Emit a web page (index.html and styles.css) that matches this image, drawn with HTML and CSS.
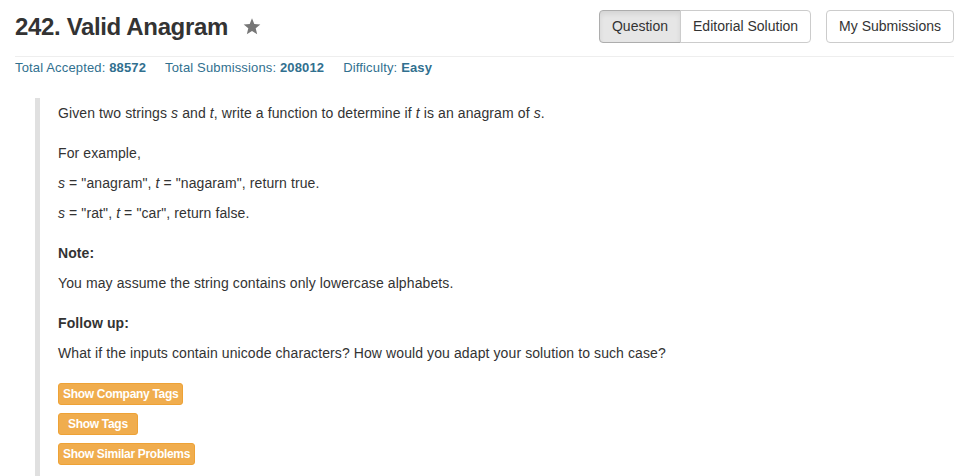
FILE: index.html
```html
<!DOCTYPE html>
<html>
<head>
<meta charset="utf-8">
<link rel="stylesheet" href="styles.css">
</head>
<body>
<div class="page">
  <div class="header">
    <h1 class="title">242. Valid Anagram
      <svg class="star" width="18" height="17" viewBox="0 0 24 23"><path d="M12 0.5l3.1 7.6 8.2 0.6-6.3 5.3 2 8-7-4.4-7 4.4 2-8L0.7 8.7l8.2-0.6z" fill="#777"/></svg>
    </h1>
    <div class="actions">
      <div class="btn-group">
        <span class="btn active">Question</span>
        <span class="btn">Editorial Solution</span>
      </div>
      <span class="btn single">My Submissions</span>
    </div>
  </div>
  <div class="stats">
    <span class="stat">Total Accepted: <b>88572</b></span>
    <span class="stat">Total Submissions: <b>208012</b></span>
    <span class="stat">Difficulty: <b>Easy</b></span>
  </div>
  <div class="question">
    <p class="gap">Given two strings <i>s</i> and <i>t</i>, write a function to determine if <i>t</i> is an anagram of <i>s</i>.</p>
    <p>For example,</p>
    <p><i>s</i> = "anagram", <i>t</i> = "nagaram", return true.</p>
    <p class="gap"><i>s</i> = "rat", <i>t</i> = "car", return false.</p>
    <p><b>Note:</b></p>
    <p class="gap">You may assume the string contains only lowercase alphabets.</p>
    <p><b>Follow up:</b></p>
    <p class="gap">What if the inputs contain unicode characters? How would you adapt your solution to such case?</p>
    <div class="tags">
      <span class="tag">Show Company Tags</span>
      <span class="tag wide">Show Tags</span>
      <span class="tag">Show Similar Problems</span>
    </div>
  </div>
</div>
</body>
</html>
```
FILE: styles.css
```css
html, body {
  margin: 0;
  padding: 0;
  background: #fff;
}
body {
  font-family: "Liberation Sans", Arial, sans-serif;
  color: #333;
  font-size: 14px;
  line-height: 20px;
}
.page {
  padding: 0 19px 0 15px;
}
.header {
  display: flex;
  justify-content: space-between;
  align-items: flex-start;
  padding-top: 10px;
  padding-bottom: 12px;
  border-bottom: 1px solid #eee;
}
.title {
  margin: 0;
  font-size: 24px;
  font-weight: bold;
  letter-spacing: -0.35px;
  line-height: 34px;
  color: #333;
  display: flex;
  align-items: center;
  gap: 15px;
}
.star {
  margin-top: -2px;
}
.actions {
  display: flex;
  gap: 15px;
}
.btn-group {
  display: flex;
}
.btn {
  display: inline-block;
  padding: 6px 12px;
  border: 1px solid #ccc;
  border-radius: 4px;
  font-size: 14px;
  line-height: 19px;
  color: #333;
  background: #fff;
}
.btn-group .btn:first-child {
  border-top-right-radius: 0;
  border-bottom-right-radius: 0;
}
.btn-group .btn:last-child {
  border-top-left-radius: 0;
  border-bottom-left-radius: 0;
  margin-left: -1px;
}
.btn.active {
  background: #e6e6e6;
  border-color: #adadad;
  box-shadow: inset 0 3px 5px rgba(0,0,0,0.08);
}
.stats {
  display: flex;
  gap: 19px;
  font-size: 13px;
  line-height: 20px;
  color: #31708f;
  padding-top: 1px;
}
.stats .stat {
  letter-spacing: 0.15px;
}
.stats b {
  font-weight: bold;
}
.question {
  margin: 20px 0 0 20px;
  padding: 5px 0 0 18px;
  border-left: 5px solid #e0e0e0;
}
.question p {
  margin: 0 0 10px;
  letter-spacing: 0.1px;
}
.question p.gap {
  margin-bottom: 20px;
}
.tags {
  display: flex;
  flex-direction: column;
  align-items: flex-start;
  gap: 8px;
  padding-bottom: 20px;
}
.tag {
  display: inline-block;
  background: #f0ad4e;
  border: 1px solid #eea236;
  color: #fff;
  font-size: 12px;
  font-weight: bold;
  line-height: 18px;
  padding: 1px 4px;
  border-radius: 3px;
  letter-spacing: -0.3px;
}
.tag.wide {
  padding: 1px 9px;
}
```
